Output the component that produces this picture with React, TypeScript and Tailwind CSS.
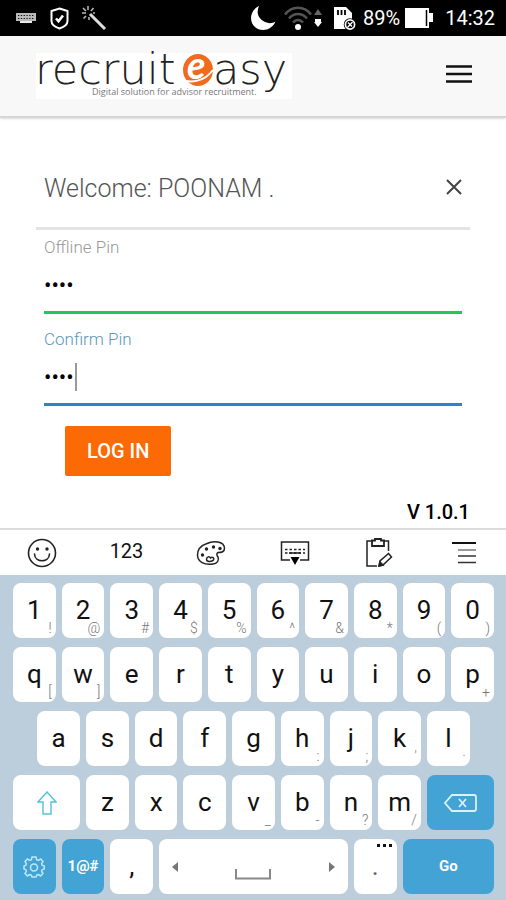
import { clsx } from "clsx";
import type { ReactNode } from "react";

type KeyDef = { label: string; hint?: string };

const numberRow: KeyDef[] = [
  { label: "1", hint: "!" },
  { label: "2", hint: "@" },
  { label: "3", hint: "#" },
  { label: "4", hint: "$" },
  { label: "5", hint: "%" },
  { label: "6", hint: "^" },
  { label: "7", hint: "&" },
  { label: "8", hint: "*" },
  { label: "9", hint: "(" },
  { label: "0", hint: ")" },
];

const topRow: KeyDef[] = [
  { label: "q", hint: "[" },
  { label: "w", hint: "]" },
  { label: "e" },
  { label: "r" },
  { label: "t" },
  { label: "y" },
  { label: "u" },
  { label: "i" },
  { label: "o" },
  { label: "p", hint: "+" },
];

const homeRow: KeyDef[] = [
  { label: "a" },
  { label: "s" },
  { label: "d" },
  { label: "f" },
  { label: "g" },
  { label: "h", hint: ":" },
  { label: "j", hint: ";" },
  { label: "k", hint: "'" },
  { label: "l", hint: "·" },
];

const bottomRow: KeyDef[] = [
  { label: "z" },
  { label: "x" },
  { label: "c" },
  { label: "v", hint: "_" },
  { label: "b", hint: "-" },
  { label: "n", hint: "?" },
  { label: "m", hint: "/" },
];

function StatusBar() {
  return (
    <div className="flex h-9 items-center bg-black pl-4 pr-[11px] text-white">
      <svg width="20" height="14" viewBox="0 0 20 14" fill="#b9b9b9">
        <path d="M0 2h20v8H0z" />
        <path
          d="M2 4.5h16M2 7.5h16"
          stroke="#111"
          strokeWidth="1.2"
          strokeDasharray="1.3 1.5"
        />
        <path d="M4 10h12v2H4z" fill="#e8e8e8" />
      </svg>
      <svg className="ml-[14px]" width="19" height="23" viewBox="0 0 19 23" fill="none" stroke="#fff">
        <path d="M9.5 1.5 17.5 4v10c0 4-3.500 6-8 7.500-4.500-1.500-8-3.500-8-7.500V4z" strokeWidth="2" />
        <path d="m6 11.500 2.500 2.800L13 8.500" strokeWidth="2.600" />
      </svg>
      <svg className="ml-3" width="26" height="26" viewBox="0 0 26 26" fill="none" stroke="#ddd">
        <path d="m9 9 15 15" strokeWidth="3" />
        <path
          d="M7 1v4M2 3l3 3M1 8h4M2.500 13.500 5 11M8 12v3M12.500 3 10 6M12 8h2"
          strokeWidth="1.500"
          stroke="#bbb"
        />
      </svg>

      <div className="ml-auto flex items-center">
        <svg width="25" height="26" viewBox="0 0 25 26" fill="#fff">
          <path d="M8 1C2 4 0 9 0 13c0 7 5.500 12 12 12 5.500 0 10-3 12.500-8.500-3 2-7 2.200-10.500.500C7 13.500 5 7.500 8 1z" />
        </svg>
        <svg className="ml-2" width="28" height="25" viewBox="0 0 28 25" fill="none" stroke="#555">
          <path
            d="M1 8.500C8-.500 20-.500 27 8.500M5 12.500c5-6 13-6 18 0M9 16.500c3-3.500 7-3.500 10 0"
            strokeWidth="2.500"
          />
          <circle cx="14" cy="21" r="3" fill="#fff" stroke="none" />
        </svg>
        <svg className="ml-[2px]" width="8" height="20" viewBox="0 0 8 20">
          <path d="m4 1 4 6H0z" fill="#666" />
          <path d="M1 11h6v3h1l-4 5-4-5h1z" fill="#fff" />
        </svg>
        <svg className="ml-3" width="23" height="25" viewBox="0 0 23 25">
          <path d="M0 1h12l6 6v16H0z" fill="#fff" />
          <path d="M4 4v5M7.500 4v5M11 4v5" stroke="#000" strokeWidth="1.800" />
          <circle cx="16" cy="18.500" r="6.200" fill="#000" />
          <circle cx="16" cy="18.500" r="4.600" fill="none" stroke="#fff" strokeWidth="1.700" />
          <path d="m13.500 21.500 5-5.500M14 16.500l4 4" stroke="#fff" strokeWidth="1.300" />
        </svg>
        <span className="ml-[6px] text-xl">89%</span>
        <svg className="ml-[5px]" width="28" height="20" viewBox="0 0 28 20" fill="#fff">
          <path d="M0 0h24v5h4v9h-4v6H0z" />
          <path d="M21.500 2v16" stroke="#000" strokeWidth="1.500" />
        </svg>
        <span className="ml-3 text-xl">14:32</span>
      </div>
    </div>
  );
}

function Logo() {
  return (
    <svg width="256" height="74" viewBox="0 0 256 74" role="img" aria-label="recruiteasy">
      <rect y="14" width="256" height="46" fill="#fff" />
      <g fontFamily="'DejaVu Sans', sans-serif" fontWeight="200" fontSize="43" fill="#222">
        <text x="-1" y="45">
          recruit
        </text>
        <text x="177" y="45">
          asy
        </text>
      </g>
      <ellipse cx="162" cy="31" rx="15" ry="16" fill="#f26a1b" />
      <path d="M146 41c9 3 22 2 31-10" fill="none" stroke="#fff" strokeWidth="2" />
      <text
        x="151"
        y="40"
        fontFamily="Lato, sans-serif"
        fontStyle="italic"
        fontWeight="700"
        fontSize="38"
        fill="#fff"
      >
        e
      </text>
      <text x="56" y="56" fontFamily="'Open Sans', sans-serif" fontSize="9" fill="#777">
        Digital solution for advisor recruitment.
      </text>
    </svg>
  );
}

function Header() {
  return (
    <header className="flex h-[82px] items-center justify-between border-b-2 border-[#d6d6d6] bg-[#f8f8f8] pl-9 pr-[33px] shadow-sm">
      <Logo />
      <button type="button" aria-label="Menu" className="pb-1">
        <svg width="28" height="20" viewBox="0 0 28 20" stroke="#111" strokeWidth="2.500">
          <path d="M1 2.500h26M1 10h26M1 17.500h26" />
        </svg>
      </button>
    </header>
  );
}

function PinField({ id, label, active }: { id: string; label: string; active?: boolean }) {
  return (
    <div>
      <label
        htmlFor={id}
        className={clsx("block text-[17px] leading-6 font-light", active ? "text-[#5b98bc]" : "text-[#999]")}
      >
        {label}
      </label>
      <div className="relative">
        <input
          id={id}
          type="password"
          defaultValue="1234"
          className={clsx(
            "block h-[55px] w-full border-b-3 text-[22px] text-black outline-none",
            active ? "border-[#3080d0]" : "border-[#1fc75c]",
          )}
        />
        {/* caret */}
        {active && <span className="absolute top-3 left-[31px] h-7 w-[2px] bg-[#999]" />}
      </div>
    </div>
  );
}

function LoginForm() {
  return (
    <form className="px-9 pt-8">
      <div className="flex h-20 items-center justify-between border-b-3 border-[#e4e4e4] px-2">
        <h1 className="text-[25px] font-light text-[#555]">Welcome: POONAM .</h1>
        <button type="button" aria-label="Close" className="pb-1">
          <svg width="16" height="18" viewBox="0 0 16 18" stroke="#444" strokeWidth="2">
            <path d="m1 2 14 14M15 2 1 16" />
          </svg>
        </button>
      </div>
      <div className="flex flex-col gap-[13px] px-2 pt-[5px]">
        <PinField id="offline-pin" label="Offline Pin" />
        <PinField id="confirm-pin" label="Confirm Pin" active />
      </div>
      <button
        type="button"
        className="mt-5 ml-[29px] h-[50px] rounded-xs bg-[#fb6a04] px-[22px] text-xl font-medium text-white"
      >
        LOG IN
      </button>
      <p className="mt-6 pb-1 text-right text-xl leading-6 font-medium text-black">V 1.0.1</p>
    </form>
  );
}

function Toolbar() {
  return (
    <div className="grid h-[47px] grid-cols-6 items-center justify-items-center border-t-2 border-[#dcdcdc] bg-white">
      <button type="button" aria-label="Emoji">
        <svg width="30" height="30" viewBox="0 0 30 30" fill="none" stroke="#222" strokeWidth="1.600">
          <circle cx="15" cy="15" r="13.500" />
          <path d="M7.500 16c.500 9 14.500 9 15 0" strokeLinecap="round" />
          <circle cx="10.500" cy="11" r="1.700" fill="#222" stroke="none" />
          <circle cx="20" cy="11" r="1.700" fill="#222" stroke="none" />
        </svg>
      </button>
      <button type="button" className="pb-1 text-xl text-[#111]">
        123
      </button>
      <button type="button" aria-label="Theme">
        <svg width="30" height="26" viewBox="0 0 30 26" fill="none" stroke="#222" strokeWidth="1.500">
          <path d="M11 3.500C17 .500 28 1 28.500 8c.200 4-3 4.500-6.500 4.500-2 1-1 3 0 4.500 1.500 3-1 7-5 7C8 25 2 22 1.500 15.500 1.300 10 5 5.500 11 3.500z" />
          <path d="M10.500 19.500c0-3 3-3.500 4-1.500 2-1.500 4 0 3 2-1.500 2-7 2-7-.500z" />
          <g fill="#222" stroke="none">
            <circle cx="6.500" cy="15" r="1.700" />
            <circle cx="10.500" cy="9" r="1.700" />
            <circle cx="17.500" cy="7" r="1.700" />
            <circle cx="24" cy="8.500" r="1.700" />
          </g>
        </svg>
      </button>
      <button type="button" aria-label="Hide keyboard">
        <svg width="30" height="26" viewBox="0 0 30 26" fill="none" stroke="#222" strokeWidth="1.500">
          <path d="M10 20H1.500V2h27v18H20" />
          <path d="M5 9.500h20M5 13h20" strokeDasharray="2.500 2" />
          <path d="M9 13h12" />
          <path d="M10.500 17h9L15 25z" fill="#000" stroke="none" />
        </svg>
      </button>
      <button type="button" aria-label="Clipboard">
        <svg width="28" height="30" viewBox="0 0 28 30" fill="none" stroke="#222" strokeWidth="1.500">
          <path d="M7 3H2v25h10M19 3h4.500v10" />
          <path d="M7 2.500h3V1h6v1.500h3V8H7z" strokeWidth="1.800" />
          <path d="m14 28 1-5 8.500-7.500 3 3.500L18 27z" />
          <path d="m14 28 1-4 3 3z" fill="#222" />
        </svg>
      </button>
      <button type="button" aria-label="More">
        <svg width="24" height="24" viewBox="0 0 24 24" stroke="#333" strokeWidth="1.700">
          <path d="M0 2h24" stroke="#111" strokeWidth="2" />
          <path d="M6 9h18" stroke="#888" />
          <path d="M6 15h18M6 21.500h18" />
        </svg>
      </button>
    </div>
  );
}

function Key({ children, hint, className }: { children: ReactNode; hint?: string; className?: string }) {
  return (
    <button
      type="button"
      className={clsx(
        "relative flex h-[55px] items-center justify-center rounded-lg",
        className ?? "col-span-2 bg-white text-[26px] text-[#111]",
      )}
    >
      {children}
      {hint && (
        <span className="absolute right-1 bottom-0.5 text-sm leading-4 font-light text-[#777]">{hint}</span>
      )}
    </button>
  );
}

function renderKeys(keys: KeyDef[]) {
  return keys.map((key) => (
    <Key key={key.label} hint={key.hint}>
      {key.label}
    </Key>
  ));
}

function Keyboard() {
  return (
    // every letter key takes two of the twenty columns
    <div className="grid grid-cols-20 gap-x-[6px] gap-y-[9px] bg-[#bccedb] pt-2 pr-3 pb-[6px] pl-[13px]">
      {renderKeys(numberRow)}
      {renderKeys(topRow)}
      <span />
      {renderKeys(homeRow)}
      <span />

      <Key className="col-span-3 bg-white">
        <svg width="20" height="24" viewBox="0 0 20 24" fill="none" stroke="#53c3d2" strokeWidth="1.400" role="img" aria-label="Shift">
          <path d="M10 1 1 11h5v12h8V11h5z" />
        </svg>
      </Key>
      {renderKeys(bottomRow)}
      <Key className="col-span-3 bg-[#43a3d5]">
        <svg width="33" height="18" viewBox="0 0 33 18" fill="none" stroke="#d9f3fb" strokeWidth="1.800" role="img" aria-label="Backspace">
          <path d="M8 1h22q2 0 2 2v12q0 2-2 2H8L1 9z" />
          <path d="m15 5 7 8M22 5l-7 8" />
        </svg>
      </Key>

      <Key className="col-span-2 bg-[#43a3d5]">
        <svg width="22" height="22" viewBox="0 0 22 22" fill="none" stroke="#bfe8f5" strokeWidth="1.500" role="img" aria-label="Settings">
          <path
            d="M9 1h4l.600 2.700 1.700.700L17.700 3l2.300 2.500-1.400 2.200.700 1.700 2 .600v3l-2 .600-.700 1.700 1.300 2.200-2.300 2.500-2.300-1.500-1.700.700L13 21H9l-.600-1.800-1.700-.700L4.400 20 2 17.500l1.400-2.200-.700-1.700L1 13v-3l1.700-.600.700-1.700L2 5.500 4.300 3l2.400 1.400 1.700-.700z"
            strokeLinejoin="round"
          />
          <circle cx="11" cy="11.500" r="3.500" />
        </svg>
      </Key>
      <Key className="col-span-2 bg-[#43a3d5] text-[15px] font-bold text-white">1@#</Key>
      <Key>,</Key>
      <Key className="col-span-8 bg-white">
        <span className="flex w-full items-center justify-between px-[13px]">
          <svg width="6" height="10" viewBox="0 0 6 10" fill="#777">
            <path d="M6 0v10L0 5z" />
          </svg>
          <svg className="mt-4" width="36" height="11" viewBox="0 0 36 11" fill="none" stroke="#888" strokeWidth="2" role="img" aria-label="Space">
            <path d="M1 0v9.500h34V0" />
          </svg>
          <svg width="6" height="10" viewBox="0 0 6 10" fill="#777">
            <path d="M0 0v10l6-5z" />
          </svg>
        </span>
      </Key>
      <Key>
        <span className="text-[#666]">.</span>
        <svg className="absolute top-[5px] right-[5px]" width="15" height="4" viewBox="0 0 15 4" fill="#111">
          <path d="M0 0h3v3H0zM6 0h3v3H6zM12 0h3v3h-3z" />
        </svg>
      </Key>
      <Key className="col-span-4 bg-[#43a3d5] text-[15px] font-bold text-white">Go</Key>
    </div>
  );
}

export default function App() {
  return (
    <div className="bg-white font-[Roboto,sans-serif]">
      <StatusBar />
      <Header />
      <LoginForm />
      <Toolbar />
      <Keyboard />
    </div>
  );
}
